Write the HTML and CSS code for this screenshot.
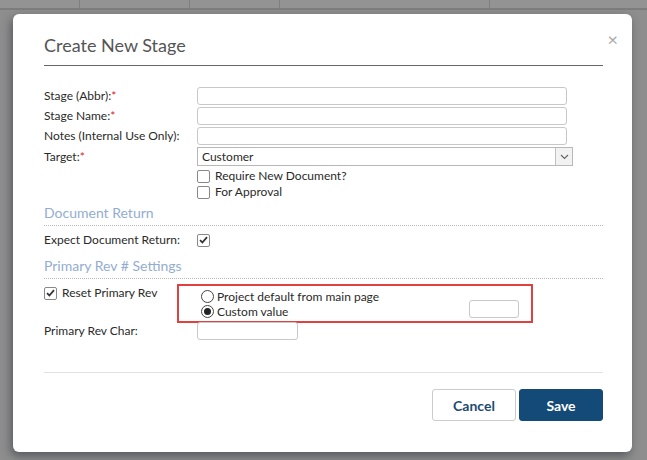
FILE: index.html
```html
<!DOCTYPE html>
<html>
<head>
<meta charset="utf-8">
<link rel="stylesheet" href="styles.css">
</head>
<body>
<div class="bg">
  <div class="bg-row">
    <span class="c1"></span><span class="c2"></span><span class="c3"></span><span class="c4"></span><span class="c5"></span>
  </div>
</div>
<div class="overlay">
  <div class="modal">
    <div class="modal-head">
      <h1>Create New Stage</h1>
    </div>
    <span class="close">×</span>
    <div class="modal-body">
      <div class="form-grid">
        <label class="lbl">Stage (Abbr):<em>*</em></label><div class="input wide"></div>
        <label class="lbl">Stage Name:<em>*</em></label><div class="input wide"></div>
        <label class="lbl">Notes (Internal Use Only):</label><div class="input wide"></div>
        <label class="lbl">Target:<em>*</em></label>
        <div class="select"><span class="sel-text">Customer</span><span class="sel-btn"><svg width="9" height="6" viewBox="0 0 9 6"><path d="M1 1 L4.5 4.5 L8 1" fill="none" stroke="#666" stroke-width="1.2"/></svg></span></div>
        <span></span>
        <div class="checks">
          <div class="check-row"><span class="cb"></span><span>Require New Document?</span></div>
          <div class="check-row"><span class="cb"></span><span>For Approval</span></div>
        </div>
      </div>

      <div class="section">Document Return</div>
      <div class="form-grid one">
        <label class="lbl">Expect Document Return:</label>
        <div class="check-row"><span class="cb on"><svg width="9" height="8" viewBox="0 0 9 8"><path d="M1 4.2 L3.4 6.5 L8 1.2" fill="none" stroke="#333" stroke-width="1.8"/></svg></span></div>
      </div>

      <div class="section s2">Primary Rev # Settings</div>
      <div class="rev-row">
        <div class="check-row reset"><span class="cb on"><svg width="9" height="8" viewBox="0 0 9 8"><path d="M1 4.2 L3.4 6.5 L8 1.2" fill="none" stroke="#333" stroke-width="1.8"/></svg></span><span>Reset Primary Rev</span></div>
        <div class="redbox">
          <div class="radios">
            <div class="radio-row"><span class="rd"></span><span>Project default from main page</span></div>
            <div class="radio-row"><span class="rd on"></span><span>Custom value</span></div>
          </div>
          <div class="input small"></div>
        </div>
      </div>
      <div class="form-grid char">
        <label class="lbl">Primary Rev Char:</label><div class="input mid"></div>
      </div>
    </div>
    <div class="modal-foot">
      <button class="btn cancel">Cancel</button>
      <button class="btn save">Save</button>
    </div>
  </div>
</div>
</body>
</html>
```

FILE: styles.css
```css
* { box-sizing: border-box; }
html, body { margin: 0; padding: 0; }
body {
  width: 647px;
  height: 460px;
  overflow: hidden;
  background: #8e8e8e;
  font-family: Lato, "Open Sans", sans-serif;
  position: relative;
}
.bg-row {
  height: 10px;
  display: flex;
  border-bottom: 2px solid #7d7d7d;
  background: #939393;
}
.bg-row span { border-right: 1px solid #7f7f7f; height: 100%; }
.bg-row .c1 { width: 80px; }
.bg-row .c2 { width: 110px; }
.bg-row .c3 { width: 90px; }
.bg-row .c4 { width: 210px; }
.bg-row .c5 { width: 100px; border-right: none; }

.overlay {
  position: absolute;
  inset: 0;
  padding: 14px 15px 0 13px;
}
.modal {
  position: relative;
  width: 619px;
  height: 438px;
  background: #fff;
  border-radius: 6px;
  box-shadow: -2px 4px 10px rgba(40, 44, 52, 0.55);
  display: flex;
  flex-direction: column;
}
.modal-head {
  margin: 0 29px 0 31px;
  padding: 20px 0 8px;
  border-bottom: 1px solid #666;
}
.modal-head h1 {
  margin: 0;
  font-weight: 400;
  font-size: 18px;
  line-height: 23px;
  color: #555;
}
.close {
  position: absolute;
  right: 14px;
  top: 15px;
  font-size: 18px;
  color: #a8a8a8;
  line-height: 20px;
}
.modal-body {
  margin: 0 29px 0 31px;
  padding-top: 21px;
  height: 307px;
  border-bottom: 1px solid #e2e2e2;
}
.form-grid {
  display: grid;
  grid-template-columns: 153px auto;
  row-gap: 2px;
  align-items: center;
  font-size: 12px;
  color: #2a2a2a;
}
.lbl { line-height: 18px; }
.lbl em { color: #e02020; font-style: normal; }
.input {
  height: 18px;
  border: 1px solid #c8c8c8;
  border-radius: 3px;
  background: #fff;
}
.input.wide { width: 370px; }
.input.mid { width: 101px; }
.input.small { width: 50px; height: 18px; margin-top: 10px; }
.select {
  width: 376px;
  height: 19px;
  border: 1px solid #b8b8b8;
  display: flex;
  align-items: center;
  justify-content: space-between;
}
.sel-text { padding-left: 4px; font-size: 12px; color: #2a2a2a; }
.sel-btn {
  width: 17px;
  height: 17px;
  border-left: 1px solid #c0c0c0;
  background: #f2f2f2;
  display: flex;
  align-items: center;
  justify-content: center;
}
.checks { display: flex; flex-direction: column; gap: 2px; padding-top: 1px; }
.check-row {
  display: flex;
  align-items: center;
  gap: 5px;
  font-size: 12px;
  color: #2a2a2a;
  line-height: 14px;
}
.cb {
  width: 13px;
  height: 13px;
  border: 1px solid #888;
  border-radius: 2px;
  background: #fff;
  display: flex;
  align-items: center;
  justify-content: center;
  flex: none;
}
.section {
  margin-top: 5px;
  font-size: 14px;
  line-height: 18px;
  color: #93add0;
  border-bottom: 1px dotted #b8b8b8;
  padding-bottom: 3px;
}
.form-grid.one { margin-top: 5px; }
.form-grid.one .check-row { height: 14px; }
.section.s2 { margin-top: 8px; }
.rev-row {
  display: flex;
  align-items: flex-start;
  margin-top: 5px;
}
.reset { width: 133px; padding-top: 2px; }
.redbox {
  width: 356px;
  height: 39px;
  border: 2px solid #e04040;
  display: flex;
  justify-content: space-between;
  padding: 4px 12px 0 22px;
}
.radios { display: flex; flex-direction: column; gap: 2px; }
.radio-row {
  display: flex;
  align-items: center;
  gap: 3px;
  font-size: 12px;
  line-height: 13px;
  color: #2a2a2a;
}
.rd {
  width: 13px;
  height: 13px;
  border: 1px solid #444;
  border-radius: 50%;
  background: #fff;
  display: flex;
  align-items: center;
  justify-content: center;
  flex: none;
}
.rd.on::after {
  content: "";
  width: 7px;
  height: 7px;
  border-radius: 50%;
  background: #222;
}
.form-grid.char { margin-top: -1px; }
.modal-foot {
  margin: 0 29px 0 31px;
  padding-top: 16px;
  display: flex;
  justify-content: flex-end;
  gap: 3px;
}
.btn {
  height: 32px;
  border-radius: 3px;
  font-family: Lato, "Open Sans", sans-serif;
  font-size: 14px;
  font-weight: 700;
  cursor: pointer;
}
.cancel {
  width: 84px;
  background: #fff;
  border: 1px solid #ccc;
  color: #1d4a74;
}
.save {
  width: 84px;
  background: #134a78;
  border: 1px solid #134a78;
  color: #fff;
}
```
